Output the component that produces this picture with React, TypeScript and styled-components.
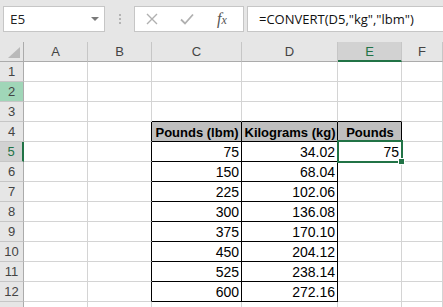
import React from 'react';
import styled, { createGlobalStyle } from 'styled-components';

const GlobalStyle = createGlobalStyle`
  html, body {
    margin: 0;
    padding: 0;
    background: #ffffff;
    overflow: hidden;
  }
  * {
    box-sizing: border-box;
  }
`;

const GREEN = '#217346';
const GRID = '#d4d4d4';
const INK = '#000000';

const Page = styled.div`
  width: 443px;
  height: 307px;
  overflow: hidden;
  font-family: 'Liberation Sans', Arial, sans-serif;
`;

const Toolbar = styled.div`
  display: flex;
  align-items: center;
  height: 42px;
  padding: 0 0 4px 3px;
  background: #e6e6e6;
`;

const Box = styled.div<{ $width?: number }>`
  display: flex;
  align-items: center;
  height: 26px;
  background: #ffffff;
  border: 1px solid #c6c6c6;
  ${({ $width }) => ($width ? `width: ${$width}px;` : 'flex: 1;')}
`;

const NameText = styled.span`
  flex: 1;
  padding-left: 6px;
  font-family: 'Open Sans', 'Liberation Sans', sans-serif;
  font-size: 13.5px;
  color: #222;
`;

const DropArrow = styled.span`
  width: 0;
  height: 0;
  margin-right: 5px;
  border-left: 4px solid transparent;
  border-right: 4px solid transparent;
  border-top: 4px solid #7a7a7a;
`;

const Grip = styled.div`
  display: flex;
  flex-direction: column;
  gap: 2px;
  margin: 0 13px 0 14px;

  span {
    width: 2px;
    height: 2px;
    background: #b4b4b4;
  }
`;

const IconButton = styled.span<{ $gap?: number }>`
  display: flex;
  align-items: center;
  justify-content: center;
  width: 30px;
  margin-left: ${({ $gap }) => $gap ?? 0}px;
`;

const Fx = styled.span`
  font-family: 'Liberation Serif', 'Times New Roman', serif;
  font-style: italic;
  font-size: 16px;
  color: #555;

  small {
    font-size: 12px;
  }
`;

const FormulaBox = styled(Box)`
  margin-left: 3px;
  border-right: none;
`;

const FormulaText = styled.span`
  padding-left: 11px;
  font-family: 'Open Sans', 'Liberation Sans', sans-serif;
  font-size: 13px;
  color: #111;
  white-space: nowrap;
`;

const Sheet = styled.div`
  display: grid;
  grid-template-columns: 24px 64px 64px 90px 96px 64px 1fr;
  grid-auto-rows: 20px;
`;

const HeadCell = styled.div<{ $active?: boolean; $corner?: boolean }>`
  position: relative;
  display: flex;
  align-items: center;
  justify-content: center;
  font-size: 13px;
  color: ${({ $active }) => ($active ? GREEN : '#444')};
  background: ${({ $active }) => ($active ? '#d2d2d2' : '#e6e6e6')};
  border-right: 1px solid ${({ $corner }) => ($corner ? '#ababab' : '#c6c6c6')};
  border-bottom: ${({ $active }) => ($active ? `2px solid ${GREEN}` : '1px solid #ababab')};
`;

const Corner = styled.span`
  position: absolute;
  right: 3px;
  bottom: 3px;
  width: 0;
  height: 0;
  border-left: 12px solid transparent;
  border-bottom: 11px solid #b9b9b9;
`;

const RowHead = styled.div<{ $tone?: 'active' | 'mark' }>`
  display: flex;
  align-items: center;
  justify-content: center;
  font-size: 13px;
  color: ${({ $tone }) => ($tone === 'active' ? GREEN : '#444')};
  background: ${({ $tone }) =>
    $tone === 'active' ? '#d2d2d2' : $tone === 'mark' ? '#a0d6b8' : '#e6e6e6'};
  border-bottom: 1px solid #c6c6c6;
  border-right: ${({ $tone }) => ($tone === 'active' ? `2px solid ${GREEN}` : '1px solid #ababab')};
`;

const Cell = styled.div<{
  $right?: boolean;
  $bottom?: boolean;
  $fill?: boolean;
  $bold?: boolean;
  $selected?: boolean;
  $align?: 'left' | 'right' | 'center';
}>`
  position: relative;
  z-index: ${({ $selected }) => ($selected ? 2 : 0)};
  display: flex;
  align-items: center;
  justify-content: ${({ $align }) =>
    $align === 'right' ? 'flex-end' : $align === 'center' ? 'center' : 'flex-start'};
  padding: 1px 2px 0 3px;
  font-size: ${({ $bold }) => ($bold ? '13px' : '14px')};
  font-weight: ${({ $bold }) => ($bold ? 700 : 400)};
  color: #000;
  white-space: nowrap;
  background: ${({ $fill }) => ($fill ? '#bfbfbf' : '#ffffff')};
  border-right: 1px solid ${({ $right }) => ($right ? INK : GRID)};
  border-bottom: 1px solid ${({ $bottom }) => ($bottom ? INK : GRID)};
`;

const Selection = styled.span`
  position: absolute;
  left: -1px;
  top: -2px;
  width: 66px;
  height: 23px;
  border: 2px solid ${GREEN};
  pointer-events: none;
`;

const Handle = styled.span`
  position: absolute;
  right: -4px;
  bottom: -4px;
  width: 7px;
  height: 7px;
  background: ${GREEN};
  border: 1px solid #ffffff;
`;

const COLUMNS = ['A', 'B', 'C', 'D', 'E', 'F'];
const POUNDS = [75, 150, 225, 300, 375, 450, 525, 600];

const CrossIcon = () => (
  <svg width="12" height="12" viewBox="0 0 12 12">
    <path d="M1 1 L11 11 M11 1 L1 11" stroke="#b0b0b0" strokeWidth="1.4" fill="none" />
  </svg>
);

const CheckIcon = () => (
  <svg width="14" height="12" viewBox="0 0 14 12">
    <path d="M1 6.5 L5 10.5 L13 1.5" stroke="#b0b0b0" strokeWidth="1.8" fill="none" />
  </svg>
);

const cellFor = (row: number, col: string) => {
  const inData = (col === 'C' || col === 'D') && row >= 4 && row <= 12;
  const inTable = inData || (col === 'E' && row === 4);
  const right = inTable || (col === 'B' && row >= 4 && row <= 12);
  const bottom = inTable || (row === 3 && ['C', 'D', 'E'].includes(col));

  if (row === 4 && inTable) {
    const label = { C: 'Pounds (lbm)', D: 'Kilograms (kg)', E: 'Pounds' }[col as 'C' | 'D' | 'E'];
    return (
      <Cell key={col} $right={right} $bottom={bottom} $fill $bold $align="center">
        {label}
      </Cell>
    );
  }

  if (inData) {
    const lbm = POUNDS[row - 5];
    const value = col === 'C' ? String(lbm) : (lbm * 0.45359237).toFixed(2);
    return (
      <Cell key={col} $right={right} $bottom={bottom} $align="right">
        {value}
      </Cell>
    );
  }

  if (row === 5 && col === 'E') {
    return (
      <Cell key={col} $selected $align="right">
        75
        <Selection>
          <Handle />
        </Selection>
      </Cell>
    );
  }

  return <Cell key={col} $right={right} $bottom={bottom} />;
};

const App: React.FC = () => {
  const rows = Array.from({ length: 13 }, (_, i) => i + 1);

  return (
    <Page>
      <GlobalStyle />
      <Toolbar>
        <Box $width={102}>
          <NameText>E5</NameText>
          <DropArrow />
        </Box>
        <Grip>
          <span />
          <span />
          <span />
        </Grip>
        <Box $width={110}>
          <IconButton $gap={2}>
            <CrossIcon />
          </IconButton>
          <IconButton $gap={5}>
            <CheckIcon />
          </IconButton>
          <IconButton $gap={5}>
            <Fx>
              f<small>x</small>
            </Fx>
          </IconButton>
        </Box>
        <FormulaBox>
          <FormulaText>=CONVERT(D5,"kg","lbm")</FormulaText>
        </FormulaBox>
      </Toolbar>
      <Sheet>
        <HeadCell $corner>
          <Corner />
        </HeadCell>
        {COLUMNS.map((c) => (
          <HeadCell key={c} $active={c === 'E'}>
            {c}
          </HeadCell>
        ))}
        {rows.map((r) => (
          <React.Fragment key={r}>
            <RowHead $tone={r === 5 ? 'active' : r === 2 ? 'mark' : undefined}>
              {r <= 12 ? r : ''}
            </RowHead>
            {COLUMNS.map((c) => cellFor(r, c))}
          </React.Fragment>
        ))}
      </Sheet>
    </Page>
  );
};

export default App;
